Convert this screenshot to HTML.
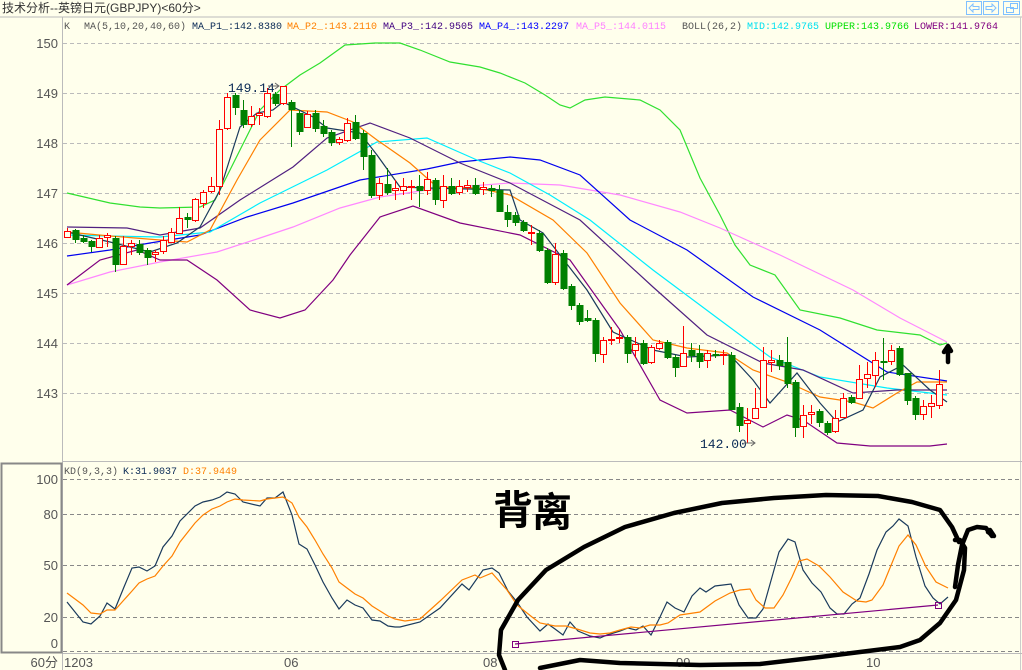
<!DOCTYPE html>
<html><head><meta charset="utf-8"><style>
html,body{margin:0;padding:0;background:#FFFFEC;}
body{width:1022px;height:670px;overflow:hidden;position:relative;font-family:"Liberation Sans","Noto Sans CJK SC",sans-serif;}
svg{position:absolute;left:0;top:0}
.m{font-family:"Liberation Mono","Noto Sans CJK SC",monospace;font-size:10px}
.ax{font-family:"Liberation Sans",sans-serif;font-size:13px;fill:#555}
</style></head><body>
<svg id="s" width="1022" height="670" xmlns="http://www.w3.org/2000/svg">
<rect width="1022" height="670" fill="#FFFFEC"/>
<text x="2" y="12" font-size="12" fill="#333" font-family="Liberation Sans,Noto Sans CJK SC,sans-serif">技术分析--英镑日元(GBPJPY)&lt;60分&gt;</text>
<g fill="none" stroke="#80C0FF" stroke-width="1">
<rect x="966.5" y="1.5" width="15" height="13"/><rect x="983.5" y="1.5" width="15" height="13"/><rect x="1003.5" y="1.5" width="16" height="13"/>
<path d="M969 8 L973 4 V6.5 H979 V9.5 H973 V12 Z"/><path d="M996 8 L992 4 V6.5 H986 V9.5 H992 V12 Z"/>
<rect x="1006.5" y="7.5" width="7" height="5"/><rect x="1010.5" y="3.5" width="7" height="5"/>
</g>
<line x1="0" y1="17" x2="1022" y2="17" stroke="#bbb"/>
<line x1="62.5" y1="17" x2="62.5" y2="670" stroke="#bbb"/>
<line x1="1020.5" y1="17" x2="1020.5" y2="670" stroke="#ccc"/>
<line x1="62" y1="461.5" x2="1022" y2="461.5" stroke="#bbb"/>
<line x1="62" y1="653.5" x2="1022" y2="653.5" stroke="#bbb"/>
<rect x="1.5" y="463.5" width="60" height="189" fill="none" stroke="#888" stroke-width="2"/>
<g stroke="#bbb" stroke-dasharray="4,3">
<line x1="63" x2="1020" y1="43.5" y2="43.5"/><line x1="63" x2="1020" y1="93.5" y2="93.5"/><line x1="63" x2="1020" y1="143.5" y2="143.5"/><line x1="63" x2="1020" y1="193.5" y2="193.5"/><line x1="63" x2="1020" y1="243.5" y2="243.5"/><line x1="63" x2="1020" y1="293.5" y2="293.5"/><line x1="63" x2="1020" y1="343.5" y2="343.5"/><line x1="63" x2="1020" y1="393.5" y2="393.5"/>
</g>
<g stroke="#888" stroke-dasharray="4,3">
<line x1="63" x2="1020" y1="479.5" y2="479.5"/><line x1="63" x2="1020" y1="514.5" y2="514.5"/><line x1="63" x2="1020" y1="565.5" y2="565.5"/><line x1="63" x2="1020" y1="617.5" y2="617.5"/><line x1="63" x2="1020" y1="651.5" y2="651.5"/>
</g>
<g class="ax" text-anchor="end">
<text x="58" y="48">150</text><text x="58" y="98">149</text><text x="58" y="148">148</text><text x="58" y="198">147</text><text x="58" y="248">146</text><text x="58" y="298">145</text><text x="58" y="348">144</text><text x="58" y="398">143</text>
<text x="58" y="484">100</text><text x="58" y="519">80</text><text x="58" y="570">50</text><text x="58" y="622">20</text><text x="58" y="648">0</text>
<text x="58" y="667">60分</text>
</g>
<g class="ax" font-size="12"><text x="64" y="667">1203</text><text x="284" y="667">06</text><text x="483" y="667">08</text><text x="676" y="667">09</text><text x="866" y="667">10</text></g>
<g class="m">
<text x="64" y="29" fill="#555">K</text>
<text x="84" y="29" fill="#555">MA(5,10,20,40,60)</text>
<text x="192" y="29" fill="#0A2A55">MA_P1_:142.8380</text>
<text x="287" y="29" fill="#FF8000">MA_P2_:143.2110</text>
<text x="383" y="29" fill="#400080">MA_P3_:142.9505</text>
<text x="479" y="29" fill="#0000FF">MA_P4_:143.2297</text>
<text x="576" y="29" fill="#FF80FF">MA_P5_:144.0115</text>
<text x="682" y="29" fill="#555">BOLL(26,2)</text>
<text x="747" y="29" fill="#00E0F0">MID:142.9765</text>
<text x="825" y="29" fill="#00E000">UPPER:143.9766</text>
<text x="914" y="29" fill="#800080">LOWER:141.9764</text>
<text x="64" y="474" fill="#555">KD(9,3,3)</text>
<text x="123" y="474" fill="#0A2A55">K:31.9037</text>
<text x="183" y="474" fill="#FF8000">D:37.9449</text>
</g>
<g fill="none" stroke-width="1.2">
<polyline stroke="#30E030" points="67,193 110,203 140,207 160,208 200,207 215,200 225,180 240,150 260,110 280,90 300,75 320,63 345,45 375,43 400,43 420,50 450,62 480,67 500,73 525,83 545,95 560,105 570,108 585,100 605,97 640,100 660,110 680,130 700,178 720,215 735,245 750,265 775,275 800,310 840,318 877,330 920,335 940,345 947,343"/>
<polyline stroke="#FF88FF" points="67,285 110,272 160,262 217,252 260,238 293,227 340,208 380,197 427,190 470,186 510,183 560,185 620,195 680,212 720,228 780,255 853,290 900,318 947,342"/>
<polyline stroke="#0000EE" points="67,256 110,250 150,243 200,235 247,217 293,203 360,180 427,169 460,162 510,157 540,160 580,175 630,220 687,250 753,297 820,330 887,372 947,381"/>
<polyline stroke="#00EEFF" points="67,235 110,236 160,237 210,232 260,203 327,170 377,142 427,138 477,160 510,173 550,195 590,220 653,270 720,320 770,357 820,377 887,388 947,395"/>
<polyline stroke="#502080" points="67,227 127,228 160,235 200,228 240,200 293,167 327,138 370,123 410,138 460,163 510,183 580,220 653,287 707,335 763,363 803,370 853,393 897,390 947,390"/>
<polyline stroke="#800080" points="67,285 100,260 137,250 160,260 187,260 217,280 250,310 280,318 305,310 333,280 350,255 380,217 413,206 460,223 520,235 570,260 620,330 660,400 687,413 730,410 763,427 787,415 803,420 837,443 870,446 930,446 947,444"/>
<polyline stroke="#FF8000" points="67,232 110,236 160,240 187,242 210,230 237,180 260,140 290,110 327,112 353,122 377,140 410,163 437,187 477,188 510,195 553,220 587,253 620,303 653,340 687,348 727,353 753,370 787,382 820,397 853,402 873,408 897,393 917,382 947,382"/>
<polyline stroke="#1A3A5C" points="67,232 110,242 150,252 177,243 200,227 220,190 240,127 257,113 273,110 283,102 313,117 327,128 360,133 377,155 400,187 427,188 510,190 520,220 543,233 587,290 613,332 653,350 687,357 730,355 753,380 770,403 797,373 820,403 837,422 863,410 880,377 903,365 930,390 947,402"/>
</g>
<g id="c"></g>
<text x="228" y="92" font-family="Liberation Mono,monospace" font-size="13" fill="#0A2A55">149.14</text>
<path d="M268 86 H279 M275 83 L279 86 L275 89" stroke="#666" fill="none"/>
<text x="700" y="448" font-family="Liberation Mono,monospace" font-size="13" fill="#0A2A55">142.00</text>
<path d="M744 443 H755 M751 440 L755 443 L751 446" stroke="#666" fill="none"/>
<g fill="none" stroke-width="1.2">
<polyline stroke="#1A3A5C" points="67,602 83,622 91,624 100,616 107,603 115,609 124,587 132,568 139,567 147,571 155,566 163,547 172,536 180,521 195,506 203,502 212,500 220,497 227,492 235,494 243,502 260,506 267,498 275,498 283,492 292,515 299,544 307,549 315,565 323,582 332,598 339,609 347,600 355,605 363,608 372,620 380,621 388,626 395,627 400,627 420,622 440,608 462,584 469,590 483,570 492,568 499,573 508,591 517,602 527,617 540,631 548,624 555,629 563,635 570,622 578,631 590,636 600,638 607,635 620,631 628,628 636,630 643,626 651,635 660,617 667,602 675,608 684,612 692,596 700,588 706,592 715,586 731,584 739,605 748,618 756,618 763,609 772,577 779,552 788,539 795,542 803,570 812,583 821,592 830,608 837,614 844,614 852,604 860,598 869,574 877,550 886,532 893,526 899,519 908,526 916,557 925,586 933,598 940,604 948,597"/>
<polyline stroke="#FF8000" points="67,593 83,605 91,613 100,614 107,610 115,610 123,601 132,591 139,583 147,579 155,576 163,566 172,556 180,542 195,523 203,515 212,509 220,506 227,502 235,499 243,500 260,501 267,499 275,498 283,497 292,503 299,517 307,527 315,540 323,554 332,568 339,582 347,588 355,594 363,598 372,606 380,611 388,616 395,619 405,621 420,619 440,601 462,580 475,575 480,578 492,573 507,590 517,605 532,617 540,623 555,626 566,626 577,629 590,633 600,634 610,633 620,630 631,627 640,628 650,625 660,625 668,623 680,615 700,612 715,601 730,593 740,590 750,589 756,600 765,608 774,608 783,595 792,577 799,561 807,559 819,566 830,577 843,592 857,601 866,602 872,600 883,585 892,563 899,546 908,535 916,545 926,567 936,582 948,588"/>
<polyline stroke="#800080" points="515,644 938,605"/>
</g>
<g fill="none" stroke="#800080"><rect x="512.5" y="641.5" width="6" height="6"/><rect x="935.5" y="602.5" width="6" height="6"/></g>
<g fill="none" stroke="#000" stroke-width="4.5" stroke-linecap="round" stroke-linejoin="round">
<path d="M959 542 L952 527 L940 510 L912 502 L878 496 L826 495 L774 498 L722 503 L674 513 L625 527 L584 547 L546 570 L518 600 L501 630 L499 655 L505 670 M540 668 L580 660 L620 663 L700 665 L760 664 L820 657 L860 652 L900 647 L920 640 L940 623 L956 600 L964 570 L965 548 L960 540 L955 540"/>
<path d="M955 587 L958 565 L962 545 L968 530 L977 527 L986 528 L992 536"/>
<path d="M988 532 L994 536 L990 530"/>
<path d="M948 362 L948 347 M944 352 L948 346 L951 351"/>
</g>
<text x="493" y="524" font-size="40" font-weight="bold" fill="#000" font-family="WenQuanYi Zen Hei,Noto Sans CJK SC,sans-serif">背</text>
<text x="532" y="526" font-size="40" font-weight="bold" fill="#000" font-family="WenQuanYi Zen Hei,Noto Sans CJK SC,sans-serif">离</text>
</svg>
<script>
var d=[
[231,237,228,238,1],[230,239,229,243,0],[238,241,235,243,0],[241,246,240,252,0],[238,247,235,248,1],[235,237,233,247,1],[238,264,236,272,0],[246,264,236,265,1],[243,246,240,255,1],[244,252,240,255,0],
[250,257,248,265,0],[252,254,250,262,1],[240,251,236,254,1],[232,242,228,243,1],[218,233,207,234,1],[217,219,213,228,0],[199,220,198,222,1],[192,203,190,208,1],[186,191,177,193,1],[129,186,120,195,1],
[97,128,93,130,1],[95,107,93,115,0],[110,124,100,128,0],[116,124,106,127,1],[113,115,108,125,1],[93,116,88,118,1],[94,103,92,106,0],[86,103,86,105,1],[102,109,100,147,0],[113,131,110,135,0],
[114,127,111,128,1],[113,128,110,132,0],[126,133,120,137,0],[132,142,130,146,0],[139,142,137,145,1],[123,140,118,142,1],[122,138,115,140,0],[133,156,130,170,0],[155,195,150,198,0],[183,195,178,200,1],
[184,192,168,195,0],[188,190,180,200,1],[186,190,178,195,1],[186,187,180,200,1],[186,190,175,207,0],[179,190,172,195,1],[180,199,178,205,0],[186,200,175,208,1],[186,193,178,195,0],[186,192,180,195,1],
[185,187,180,192,1],[185,193,178,195,0],[187,189,182,195,1],[188,190,185,197,0],[190,211,185,212,0],[212,219,205,227,0],[215,222,212,226,0],[222,230,220,232,0],[232,233,225,245,1],[233,250,230,252,0],
[250,282,248,284,0],[254,282,243,285,1],[253,288,250,290,0],[286,305,284,310,0],[305,321,303,325,0],[318,320,310,322,0],[320,353,318,362,0],[340,354,337,363,1],[339,340,327,345,1],[337,338,330,343,1],
[337,353,335,363,0],[344,350,337,358,1],[343,363,340,365,0],[347,362,345,364,1],[343,348,340,350,1],[342,357,340,359,0],[357,367,355,377,0],[353,366,326,366,1],[350,355,343,362,0],[353,361,345,368,0],
[353,360,350,368,1],[354,355,350,358,0],[354,355,350,365,1],[355,409,352,409,0],[407,425,403,432,0],[420,423,408,443,1],[408,418,388,418,1],[360,407,347,408,1],[360,362,350,372,1],[360,365,355,370,0],
[362,383,337,388,0],[382,427,380,437,0],[415,426,405,438,1],[412,414,405,424,1],[411,422,409,427,0],[423,432,421,435,0],[418,431,410,433,1],[398,417,393,417,1],[397,402,395,404,0],[379,398,365,398,1],
[374,378,362,388,1],[360,375,352,387,1],[361,362,338,380,0],[350,361,345,365,1],[348,374,346,376,0],[373,400,375,405,0],[398,414,396,420,0],[406,414,400,420,1],[403,406,395,418,1],[384,405,370,409,1]];
var s='';
for(var i=0;i<d.length;i++){var x=67+8*i,c=d[i],col=c[4]?'#FF0000':'#008000';
s+='<line x1="'+(x+.5)+'" x2="'+(x+.5)+'" y1="'+c[2]+'" y2="'+c[3]+'" stroke="'+col+'" stroke-width="1"/>';
var h=Math.max(c[1]-c[0],1);
if(c[4])s+='<rect x="'+(x-2.5)+'" y="'+(c[0]+.5)+'" width="6" height="'+h+'" fill="#FFFFEC" stroke="#FF0000" stroke-width="1"/>';
else s+='<rect x="'+(x-2.5)+'" y="'+c[0]+'" width="7" height="'+(h+1)+'" fill="#008000"/>';}
document.getElementById('c').innerHTML=s;
</script>
</body></html>
